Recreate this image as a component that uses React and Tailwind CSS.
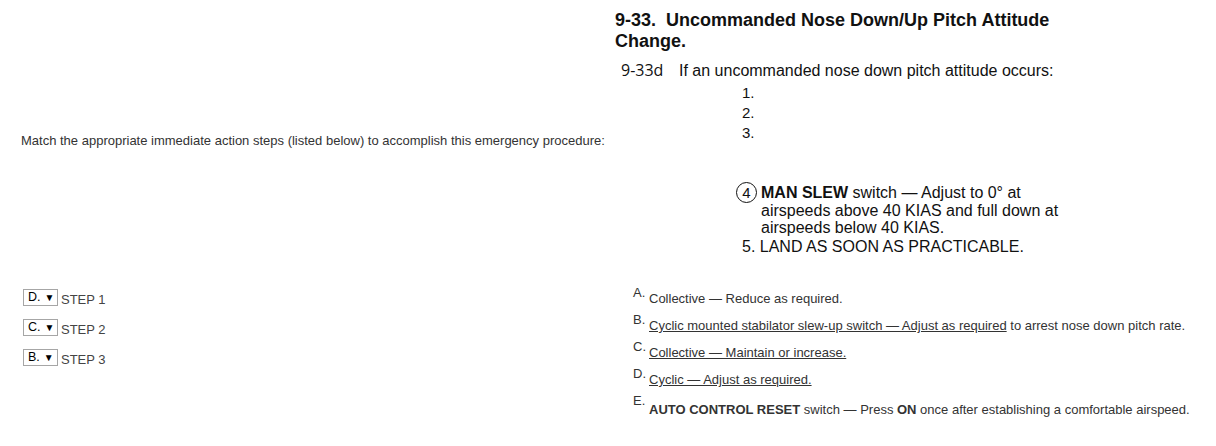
import React from "react";

function Sel({ v }) {
  return (
    <div className="flex items-center h-[17px] w-[35px] border border-[#a6a6a6] bg-white pl-[4px] text-[12.5px] leading-none text-black font-['Liberation_Sans',sans-serif]">
      <span>{v}</span>
      <span className="ml-[4px] text-[10px]">▼</span>
    </div>
  );
}

function Ans({ l, children, tall }) {
  return (
    <div className={`flex items-start ${tall ? "h-[30px]" : "h-[27px]"}`}>
      <span className="text-[13px] leading-none w-[16px]">{l}</span>
      <span className={`text-[13px] leading-none ${tall ? "pt-[9px]" : "pt-[6px]"}`}>{children}</span>
    </div>
  );
}

export default function App() {
  return (
    <div className="bg-white w-[1216px] h-[446px] text-[#333] font-['Liberation_Sans',Arial,sans-serif]">
      <div className="flex">
        <div className="w-[612px] pl-[21px] flex items-center text-[13px]">
          Match the appropriate immediate action steps (listed below) to accomplish this emergency procedure:
        </div>
        <div className="w-[455px] h-[282px] bg-white text-[#111] pt-[10px] pl-[3px]">
          <div className="font-bold text-[18px] leading-[21px]">
            9-33.&nbsp; Uncommanded Nose Down/Up Pitch Attitude
            <br />
            Change.
          </div>
          <div className="flex items-baseline mt-[6px] pl-[6px]">
            <span className="font-['Open_Sans',sans-serif] text-[16px] w-[58px]">9-33d</span>
            <span className="text-[16px]">If an uncommanded nose down pitch attitude occurs:</span>
          </div>
          <div className="pl-[127px] text-[15px] leading-[20px] mt-[0px]">
            <div>1.</div>
            <div>2.</div>
            <div>3.</div>
          </div>
          <div className="pl-[121px] mt-[41px] text-[16px] leading-[17.5px]">
            <div className="flex">
              <span className="mt-[-2px] mr-[4px] flex items-center justify-center w-[21px] h-[21px] rounded-full border-[1.5px] border-[#111] text-[15px] leading-none shrink-0">4</span>
              <div>
                <b>MAN SLEW</b> switch — Adjust to 0° at
                <br />
                airspeeds above 40 KIAS and full down at
                <br />
                airspeeds below 40 KIAS.
              </div>
            </div>
            <div className="pl-[6px] mt-[1px]">5. LAND AS SOON AS PRACTICABLE.</div>
          </div>
        </div>
      </div>
      <div className="flex mt-[4px]">
        <div className="w-[612px] pl-[23px] pt-[3px] flex flex-col gap-[13px]">
          {[["D.", "STEP 1"], ["C.", "STEP 2"], ["B.", "STEP 3"]].map(([v, s]) => (
            <div key={s} className="flex items-end">
              <Sel v={v} />
              <span className="text-[13px] leading-none ml-[3px] text-[#444]">{s}</span>
            </div>
          ))}
        </div>
        <div className="pl-[21px]">
          <Ans l="A.">Collective — Reduce as required.</Ans>
          <Ans l="B.">
            <span className="underline">Cyclic mounted stabilator slew-up switch — Adjust as required</span> to arrest nose down pitch rate.
          </Ans>
          <Ans l="C.">
            <span className="underline">Collective — Maintain or increase.</span>
          </Ans>
          <Ans l="D.">
            <span className="underline">Cyclic — Adjust as required.</span>
          </Ans>
          <Ans l="E." tall>
            <b>AUTO CONTROL RESET</b> switch — Press <b>ON</b> once after establishing a comfortable airspeed.
          </Ans>
        </div>
      </div>
    </div>
  );
}
